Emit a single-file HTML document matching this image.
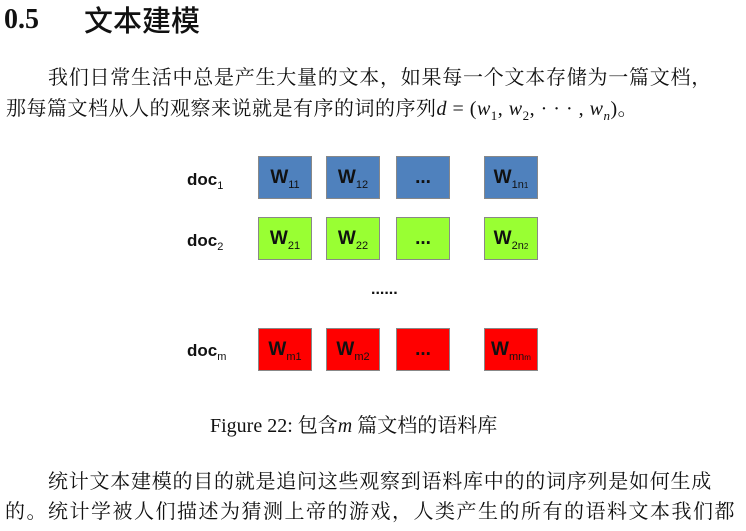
<!DOCTYPE html>
<html><head><meta charset="utf-8"><style>
body{margin:0;width:746px;height:531px;background:#fff;position:relative;overflow:hidden;font-family:"Liberation Serif","Noto Serif CJK SC",serif;color:#111}
.a{position:absolute;white-space:nowrap}
.cn{font-size:20px;line-height:24px}
.box{position:absolute;width:54px;height:43px;border:1px solid #888;box-sizing:border-box;font-family:"Liberation Sans",sans-serif;font-weight:bold;font-size:19px;color:#111;text-align:center;line-height:41px}
.box span{display:inline-block}
.box sub{font-size:11px;font-weight:normal;vertical-align:-5px;line-height:0}
.box small{font-size:8px}
.b{background:#4f81bd}.g{background:#99ff33}.r{background:#ff0000}
.doc{position:absolute;font-family:"Liberation Sans",sans-serif;font-weight:bold;font-size:17px;left:187px}
.doc sub{font-size:11px;font-weight:normal;vertical-align:-4px;line-height:0}
i{font-family:"Liberation Serif",serif}
</style></head><body>
<div class="a" style="left:4px;top:3px;font-size:28px;font-weight:bold;line-height:34px">0.5</div>
<div class="a" style="left:84px;top:1px;font-size:29px;line-height:36px;font-family:'Noto Sans CJK SC',sans-serif;font-weight:500">文本建模</div>
<div class="a cn" style="left:48px;top:66px;letter-spacing:.75px">我们日常生活中总是产生大量的文本，如果每一个文本存储为一篇文档，</div>
<div class="a cn" style="left:6px;top:97px;letter-spacing:.5px">那每篇文档从人的观察来说就是有序的词的序列<i>d</i> = (<i>w</i><sub style="font-size:13px">1</sub>, <i>w</i><sub style="font-size:13px">2</sub>, · · · , <i>w<sub style="font-size:13px">n</sub></i>)。</div>

<div class="doc" style="top:170px">doc<sub>1</sub></div>
<div class="doc" style="top:231px">doc<sub>2</sub></div>
<div class="doc" style="top:341px">doc<sub>m</sub></div>

<div class="box b" style="left:258px;top:156px"><span>W<sub>11</sub></span></div>
<div class="box b" style="left:326px;top:156px"><span>W<sub>12</sub></span></div>
<div class="box b" style="left:396px;top:156px"><span>...</span></div>
<div class="box b" style="left:484px;top:156px"><span>W<sub>1n<small>1</small></sub></span></div>

<div class="box g" style="left:258px;top:217px"><span>W<sub>21</sub></span></div>
<div class="box g" style="left:326px;top:217px"><span>W<sub>22</sub></span></div>
<div class="box g" style="left:396px;top:217px"><span>...</span></div>
<div class="box g" style="left:484px;top:217px"><span>W<sub>2n<small>2</small></sub></span></div>

<div class="a" style="left:371px;top:281px;font-family:'Liberation Sans',sans-serif;font-weight:bold;font-size:16px">......</div>

<div class="box r" style="left:258px;top:328px"><span>W<sub>m1</sub></span></div>
<div class="box r" style="left:326px;top:328px"><span>W<sub>m2</sub></span></div>
<div class="box r" style="left:396px;top:328px"><span>...</span></div>
<div class="box r" style="left:484px;top:328px"><span>W<sub>mn<small>m</small></sub></span></div>

<div class="a cn" style="left:210px;top:414px">Figure 22: 包含<i>m</i> 篇文档的语料库</div>
<div class="a cn" style="left:48px;top:470px;letter-spacing:.75px">统计文本建模的目的就是追问这些观察到语料库中的的词序列是如何生成</div>
<div class="a cn" style="left:5px;top:500px;letter-spacing:1.5px">的。统计学被人们描述为猜测上帝的游戏，人类产生的所有的语料文本我们都</div>
</body></html>
